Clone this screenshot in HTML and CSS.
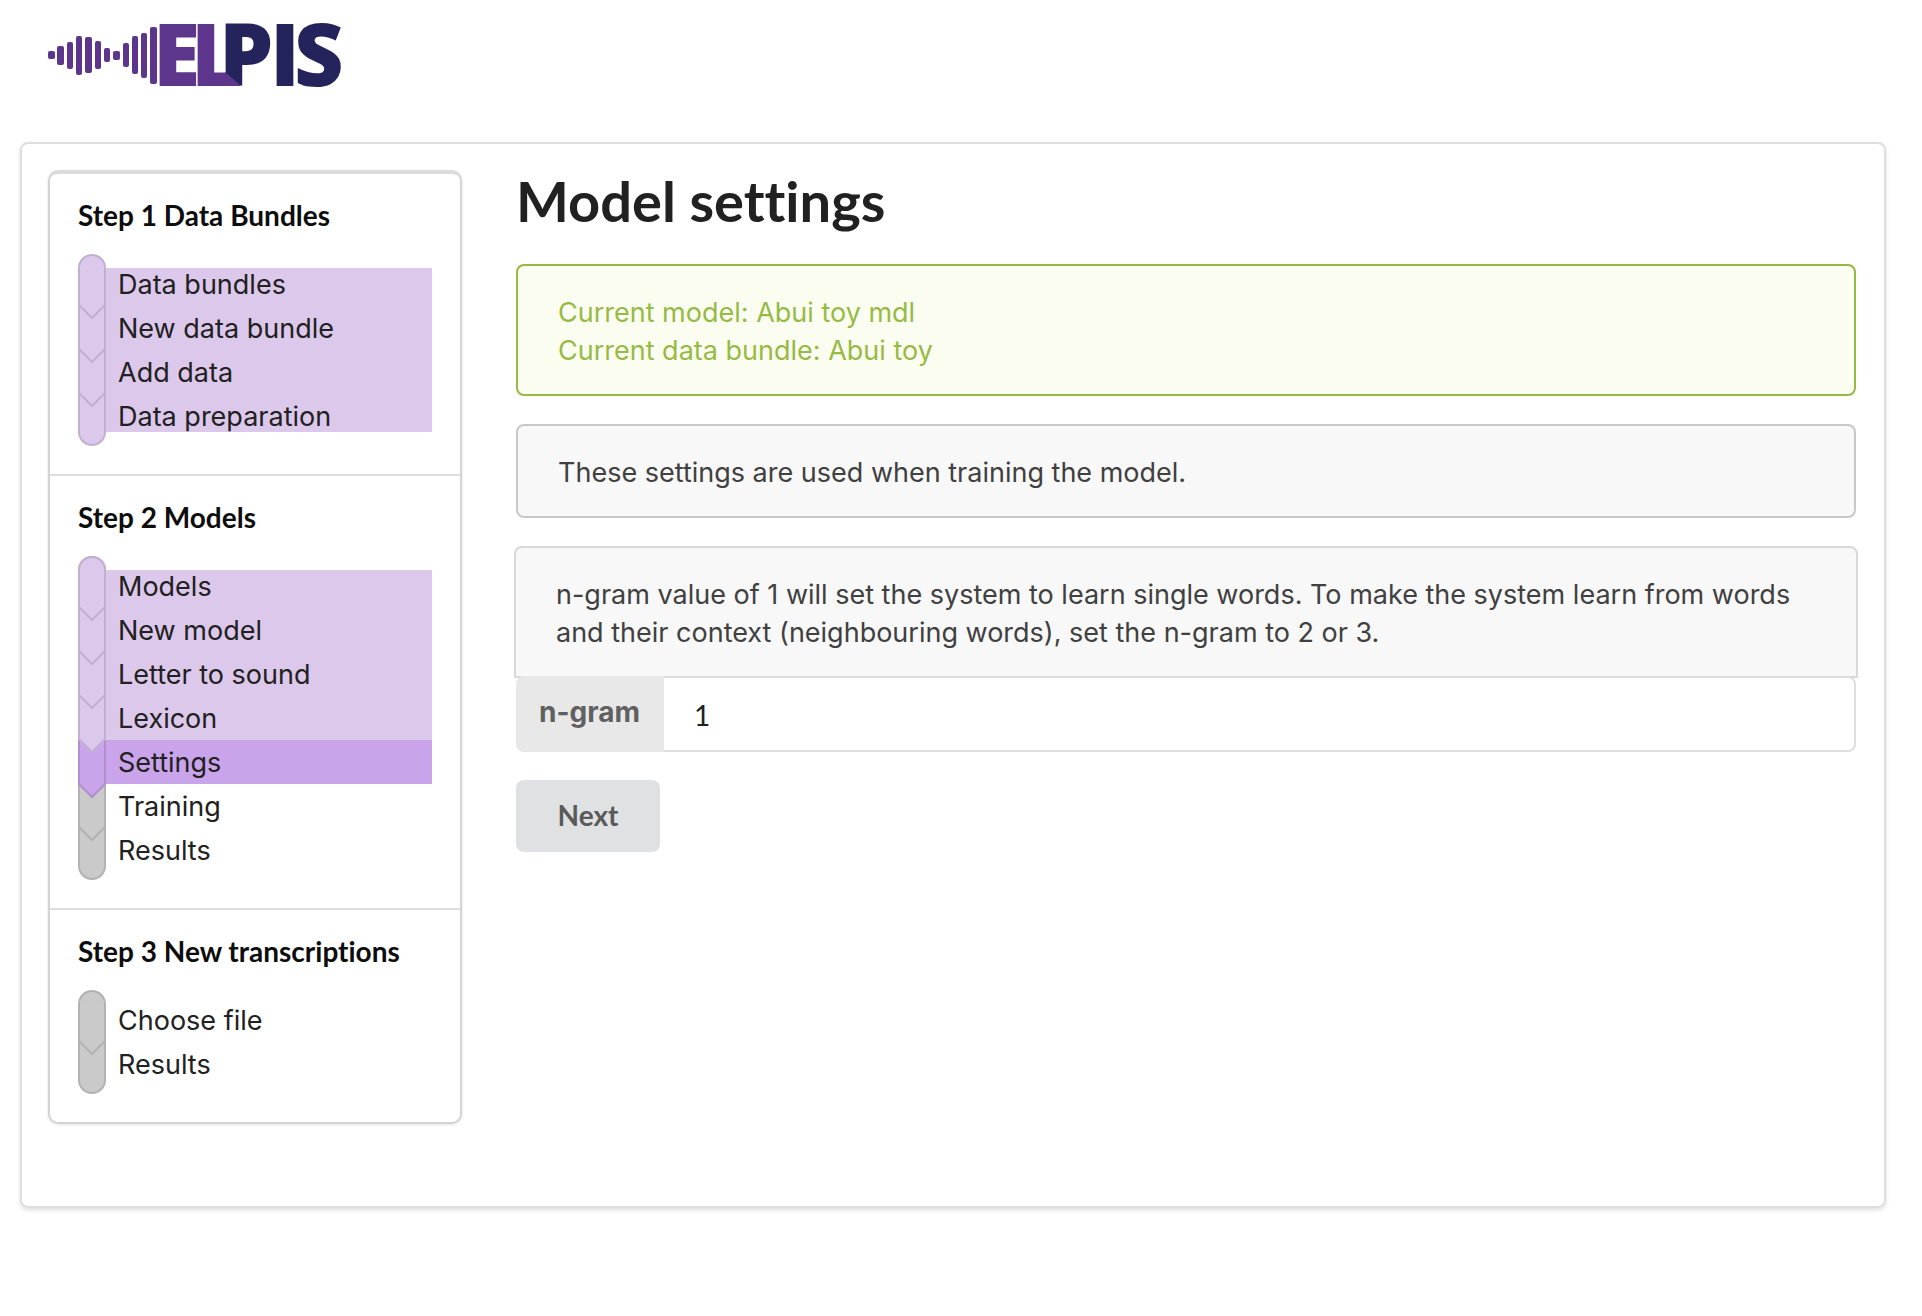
FILE: index.html
```html
<!DOCTYPE html>
<html lang="en">
<head>
<meta charset="utf-8">
<meta name="viewport" content="width=device-width, initial-scale=1">
<title>Elpis</title>
<link rel="stylesheet" href="styles.css">
</head>
<body>
<header class="header">
  <a class="logo-link" href="#" aria-label="Elpis home">
    <svg class="logo" width="300" height="120" viewBox="0 -20 300 120">
      <g fill="#5e358c">
        <rect x="0" y="31" width="7" height="8" rx="2"/>
        <rect x="9" y="26" width="7" height="19" rx="2"/>
        <rect x="19" y="22" width="6" height="27" rx="2"/>
        <rect x="28" y="16" width="6" height="39" rx="2"/>
        <rect x="37" y="17" width="7" height="36" rx="2"/>
        <rect x="47" y="21" width="6" height="28" rx="2"/>
        <rect x="56" y="28" width="6" height="14" rx="2"/>
        <rect x="65" y="31" width="7" height="9" rx="2"/>
        <rect x="75" y="23" width="6" height="24" rx="2"/>
        <rect x="84" y="16" width="6" height="38" rx="2"/>
        <rect x="93" y="13" width="6" height="45" rx="2"/>
        <rect x="102" y="7" width="7" height="57" rx="2"/>
      </g>
      <text class="logo-text" x="105 143 171 222 246" y="66">EL<tspan class="logo-text-dark">PIS</tspan></text>
      <path fill="#5e358c" d="M177 52L193 66H177z"/>
    </svg>
  </a>
</header>

<div class="panel">
  <nav class="steps" aria-label="Steps">
    <section class="step">
      <h2 class="step-title">Step 1 Data Bundles</h2>
      <div class="step-body">
        <svg class="rail" width="28" height="192" viewBox="0 0 28 192">
          <rect class="rail-done" x="1" y="1" width="26" height="190" rx="13"/>
          <path class="rail-done-line" d="M1 51l13 13 13-13M1 95l13 13 13-13M1 139l13 13 13-13"/>
        </svg>
        <ul class="step-list">
          <li class="done first"><a href="#">Data bundles</a></li>
          <li class="done"><a href="#">New data bundle</a></li>
          <li class="done"><a href="#">Add data</a></li>
          <li class="done last"><a href="#">Data preparation</a></li>
        </ul>
      </div>
    </section>
    <section class="step">
      <h2 class="step-title">Step 2 Models</h2>
      <div class="step-body">
        <svg class="rail" width="28" height="324" viewBox="0 0 28 324">
          <rect class="rail-todo" x="1" y="1" width="26" height="322" rx="13"/>
          <path class="rail-done" d="M1 186V14a13 13 0 0 1 26 0V186z"/>
          <path class="rail-active-fill" d="M0 184h28v44L14 242 0 228z"/>
          <path class="rail-active-line" d="M1 184v44l13 13 13-13v-44"/>
          <path class="rail-done-fill" d="M2 183h24v1L14 196 2 184z"/>
          <path class="rail-done-line" d="M1 51l13 13 13-13M1 95l13 13 13-13M1 139l13 13 13-13M1 183l13 13 13-13"/>
          <path class="rail-todo-line" d="M1 271l13 13 13-13"/>
        </svg>
        <ul class="step-list">
          <li class="done first"><a href="#">Models</a></li>
          <li class="done"><a href="#">New model</a></li>
          <li class="done"><a href="#">Letter to sound</a></li>
          <li class="done"><a href="#">Lexicon</a></li>
          <li class="active"><a href="#" aria-current="step">Settings</a></li>
          <li><a href="#">Training</a></li>
          <li><a href="#">Results</a></li>
        </ul>
      </div>
    </section>
    <section class="step">
      <h2 class="step-title">Step 3 New transcriptions</h2>
      <div class="step-body">
        <svg class="rail" width="28" height="104" viewBox="0 0 28 104">
          <rect class="rail-todo" x="1" y="1" width="26" height="102" rx="13"/>
          <path class="rail-todo-line" d="M1 51l13 13 13-13"/>
        </svg>
        <ul class="step-list">
          <li><a href="#">Choose file</a></li>
          <li><a href="#">Results</a></li>
        </ul>
      </div>
    </section>
  </nav>

  <main class="content">
    <h1 class="title">Model settings</h1>
    <div class="message success">
      <p>Current model: Abui toy mdl</p>
      <p>Current data bundle: Abui toy</p>
    </div>
    <div class="message"><p>These settings are used when training the model.</p></div>
    <form class="form">
      <div class="message attached"><p>n-gram value of 1 will set the system to learn single words. To make the system learn from words and their context (neighbouring words), set the n-gram to 2 or 3.</p></div>
      <div class="field">
        <label class="field-label" for="ngram">n-gram</label>
        <input class="field-input" id="ngram" type="text" value="1">
      </div>
      <button class="button" type="button">Next</button>
    </form>
  </main>
</div>
</body>
</html>
```

FILE: styles.css
```css
* { box-sizing: border-box; }

body {
  margin: 0;
  padding: 0 36px 40px 20px;
  background: #fff;
  color: #212121;
  font: 27px/38px Inter, "Liberation Sans", sans-serif;
  font-variant-ligatures: none;
}

h1, h2, p, ul { margin: 0; padding: 0; }
a { color: inherit; text-decoration: none; }

.header { height: 142px; padding-left: 28px; }
.logo-link, .logo, .rail { display: block; }
.logo-link { width: 300px; }
.logo-text { fill: #5e358c; font: 800 86px "Open Sans", sans-serif; }
.logo-text-dark { fill: #24235c; }

.panel {
  display: flex;
  align-items: flex-start;
  gap: 54px;
  padding: 26px 28px 82px 26px;
  border: 2px solid #dedede;
  border-radius: 8px;
  box-shadow: 0 2px 4px rgba(34, 36, 38, .15);
}

.steps {
  flex: 0 0 414px;
  border: 2px solid #d4d4d5;
  border-top: 4px solid #dcdcdc;
  border-radius: 10px;
  box-shadow: 0 1px 3px rgba(34, 36, 38, .12);
}
.step { padding: 0 28px 28px; }
.step + .step { border-top: 2px solid #dedede; }
.step-title {
  height: 80px;
  padding-top: 23px;
  color: #0d0d0d;
  font: 700 28px/36px Lato, sans-serif;
  font-variant-ligatures: none;
}
.step-body { display: flex; }
.step-list { flex: 1; padding: 8px 0; list-style: none; }
.step-list li { height: 44px; padding-left: 12px; line-height: 46px; }
.step-list a { display: block; }
.done { background: #dcc8eb; }
.active { background: #caa4eb; }
.first { background: linear-gradient(transparent 6px, #dcc8eb 6px); }
.last { background: linear-gradient(#dcc8eb 38px, transparent 38px); }

.rail { flex: none; fill: none; stroke-width: 2; }
.rail-done { fill: #dcc8eb; stroke: #c2b0d0; }
.rail-done-fill { fill: #dcc8eb; }
.rail-done-line { stroke: #c2b0d0; }
.rail-active-fill { fill: #caa4eb; }
.rail-active-line { stroke: #b18fce; }
.rail-todo { fill: #cacaca; stroke: #b2b2b2; }
.rail-todo-line { stroke: #b2b2b2; }

.content { flex: 1; min-width: 0; }
.title {
  margin-bottom: 32px;
  font: 700 56px/62px Lato, sans-serif;
  font-variant-ligatures: none;
}
.message {
  margin-bottom: 28px;
  padding: 28px 40px 24px;
  border: 2px solid #c8c8c9;
  border-radius: 8px;
  background: #f8f8f8;
  color: #404040;
}
.success { border-color: #96b944; background: #fcfdf1; color: #96bb45; }
.attached {
  margin: 0 -2px -2px;
  border-color: #d9d9d9;
  border-radius: 8px 8px 0 0;
}
.field { display: flex; height: 76px; margin-bottom: 28px; }
.field-label {
  position: relative;
  width: 148px;
  padding: 17px 0 0 23px;
  border-radius: 8px 0 0 8px;
  background: #e8e8e8;
  color: #606060;
  font-size: 28px;
  font-weight: 700;
}
.field-input {
  flex: 1;
  min-width: 0;
  padding: 2px 28px 0 30px;
  border: 2px solid #dedede;
  border-left: 0;
  border-radius: 0 8px 8px 0;
  background: #fff;
  color: #212121;
  font: 28px Lato, sans-serif;
}
.button {
  display: block;
  width: 144px;
  height: 72px;
  padding: 0 0 2px;
  border: 0;
  border-radius: 8px;
  background: #e0e1e2;
  color: #5a5a5a;
  font: 700 28px Lato, sans-serif;
}
```
